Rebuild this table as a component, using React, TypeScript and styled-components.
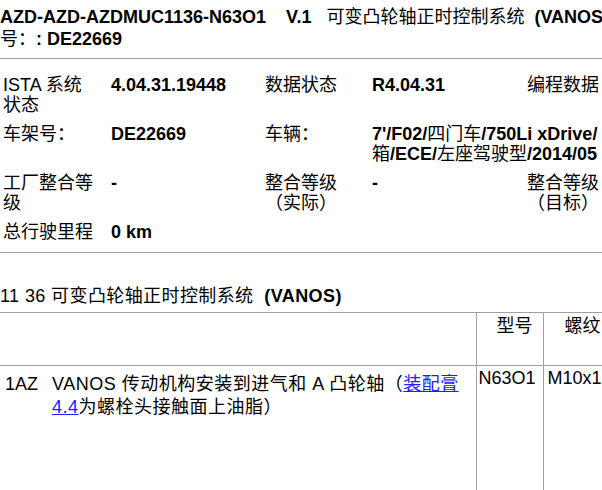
import styled, { createGlobalStyle } from 'styled-components';

const GlobalStyle = createGlobalStyle`
    html, body {
        margin: 0;
        padding: 0;
        background: #ffffff;
    }
    body {
        font-family: "Liberation Sans", "Noto Sans CJK SC", sans-serif;
        color: #000000;
    }
`;

const Page = styled.div`
    width: 602px;
    height: 490px;
    overflow: hidden;
    background: #ffffff;
`;

const Title = styled.div`
    padding-top: 6px;
    font-size: 18px;
    font-weight: bold;
    line-height: 22px;
    white-space: nowrap;
`;

const Rule = styled.hr<{ gap: number }>`
    margin: ${(props) => props.gap}px 0 0 0;
    border: 0;
    border-top: 1px solid #a0a0a0;
    width: 100%;
`;

const InfoTable = styled.table`
    margin-top: 12px;
    width: 680px;
    table-layout: fixed;
    border-collapse: collapse;
    font-size: 18px;
    line-height: 20px;
`;

const InfoCell = styled.td<{ bold?: boolean }>`
    padding: 4px 0 5px 3px;
    vertical-align: top;
    white-space: nowrap;
    overflow: hidden;
    font-weight: ${(props) => (props.bold ? 'bold' : 'normal')};
`;

const Plain = styled.span`
    font-weight: normal;
`;

const Heading = styled.div`
    margin-top: 33px;
    font-size: 18px;
    line-height: 20px;
    letter-spacing: 0.4px;
    white-space: nowrap;
`;

const PartsTable = styled.table`
    margin-top: 6px;
    width: 680px;
    table-layout: fixed;
    border-collapse: collapse;
    font-size: 18px;
    line-height: 23px;
`;

const PartsRow = styled.tr<{ height: number }>`
    height: ${(props) => props.height}px;
    border-top: 1px solid #a0a0a0;
`;

const PartsCell = styled.td<{ divider?: boolean; pad?: string; align?: string }>`
    padding: ${(props) => props.pad || '1px 0 0 2px'};
    vertical-align: top;
    white-space: nowrap;
    text-align: ${(props) => props.align || 'left'};
    border-left: ${(props) => (props.divider ? '1px solid #a0a0a0' : 'none')};
`;

const Description = styled(PartsCell)`
    letter-spacing: 0.5px;
`;

const Link = styled.a`
    color: #2020ff;
    text-decoration: underline;
`;

const infoRows = [
    { label: <>ISTA 系统<br />状态</>, value: '4.04.31.19448', label2: '数据状态', value2: 'R4.04.31', label3: <>编程数据</> },
    { label: '车架号：', value: 'DE22669', label2: '车辆：', value2: null, label3: null },
    { label: <>工厂整合等<br />级</>, value: '-', label2: <>整合等级<br />（实际）</>, value2: '-', label3: <>整合等级<br />（目标）</> },
    { label: '总行驶里程', value: '0 km', label2: null, value2: null, label3: null },
];

export default function App() {
    return (
        <Page>
            <GlobalStyle />
            <Title>
                AZD-AZD-AZDMUC1136-N63O1&nbsp;&nbsp;&nbsp;&nbsp;V.1&nbsp;&nbsp;&nbsp;<Plain>可变凸轮轴正时控制系统</Plain>&nbsp; (VANOS)
                <br />
                <Plain>号：</Plain>: DE22669
            </Title>
            <Rule gap={8} />
            <InfoTable>
                <colgroup>
                    <col style={{ width: 108 }} />
                    <col style={{ width: 154 }} />
                    <col style={{ width: 107 }} />
                    <col style={{ width: 155 }} />
                    <col style={{ width: 156 }} />
                </colgroup>
                <tbody>
                    {infoRows.map((row, i) => (
                        <tr key={i}>
                            <InfoCell>{row.label}</InfoCell>
                            <InfoCell bold>{row.value}</InfoCell>
                            <InfoCell>{row.label2}</InfoCell>
                            {i === 1 ? (
                                <InfoCell bold colSpan={2}>
                                    7'/F02/<Plain>四门车</Plain>/750Li xDrive/
                                    <br />
                                    <Plain>箱</Plain>/ECE/<Plain>左座驾驶型</Plain>/2014/05
                                </InfoCell>
                            ) : (
                                <>
                                    <InfoCell bold>{row.value2}</InfoCell>
                                    <InfoCell>{row.label3}</InfoCell>
                                </>
                            )}
                        </tr>
                    ))}
                </tbody>
            </InfoTable>
            <Rule gap={5} />
            <Heading>
                11 36 可变凸轮轴正时控制系统&nbsp; <b>(VANOS)</b>
            </Heading>
            <PartsTable>
                <colgroup>
                    <col style={{ width: 47 }} />
                    <col style={{ width: 429 }} />
                    <col style={{ width: 67 }} />
                    <col style={{ width: 137 }} />
                </colgroup>
                <tbody>
                    <PartsRow height={53}>
                        <PartsCell colSpan={2} />
                        <PartsCell divider align="center" pad="2px 0 0 10px">型号</PartsCell>
                        <PartsCell divider pad="2px 0 0 21px">螺纹</PartsCell>
                    </PartsRow>
                    <PartsRow height={130}>
                        <PartsCell pad="7px 0 0 5px">1AZ</PartsCell>
                        <Description pad="7px 0 0 5px">
                            VANOS 传动机构安装到进气和 A 凸轮轴（<Link href="#">装配膏</Link>
                            <br />
                            <Link href="#">4.4</Link>为螺栓头接触面上油脂）
                        </Description>
                        <PartsCell divider>N63O1</PartsCell>
                        <PartsCell divider pad="1px 0 0 4px">M10x1</PartsCell>
                    </PartsRow>
                </tbody>
            </PartsTable>
        </Page>
    );
}
